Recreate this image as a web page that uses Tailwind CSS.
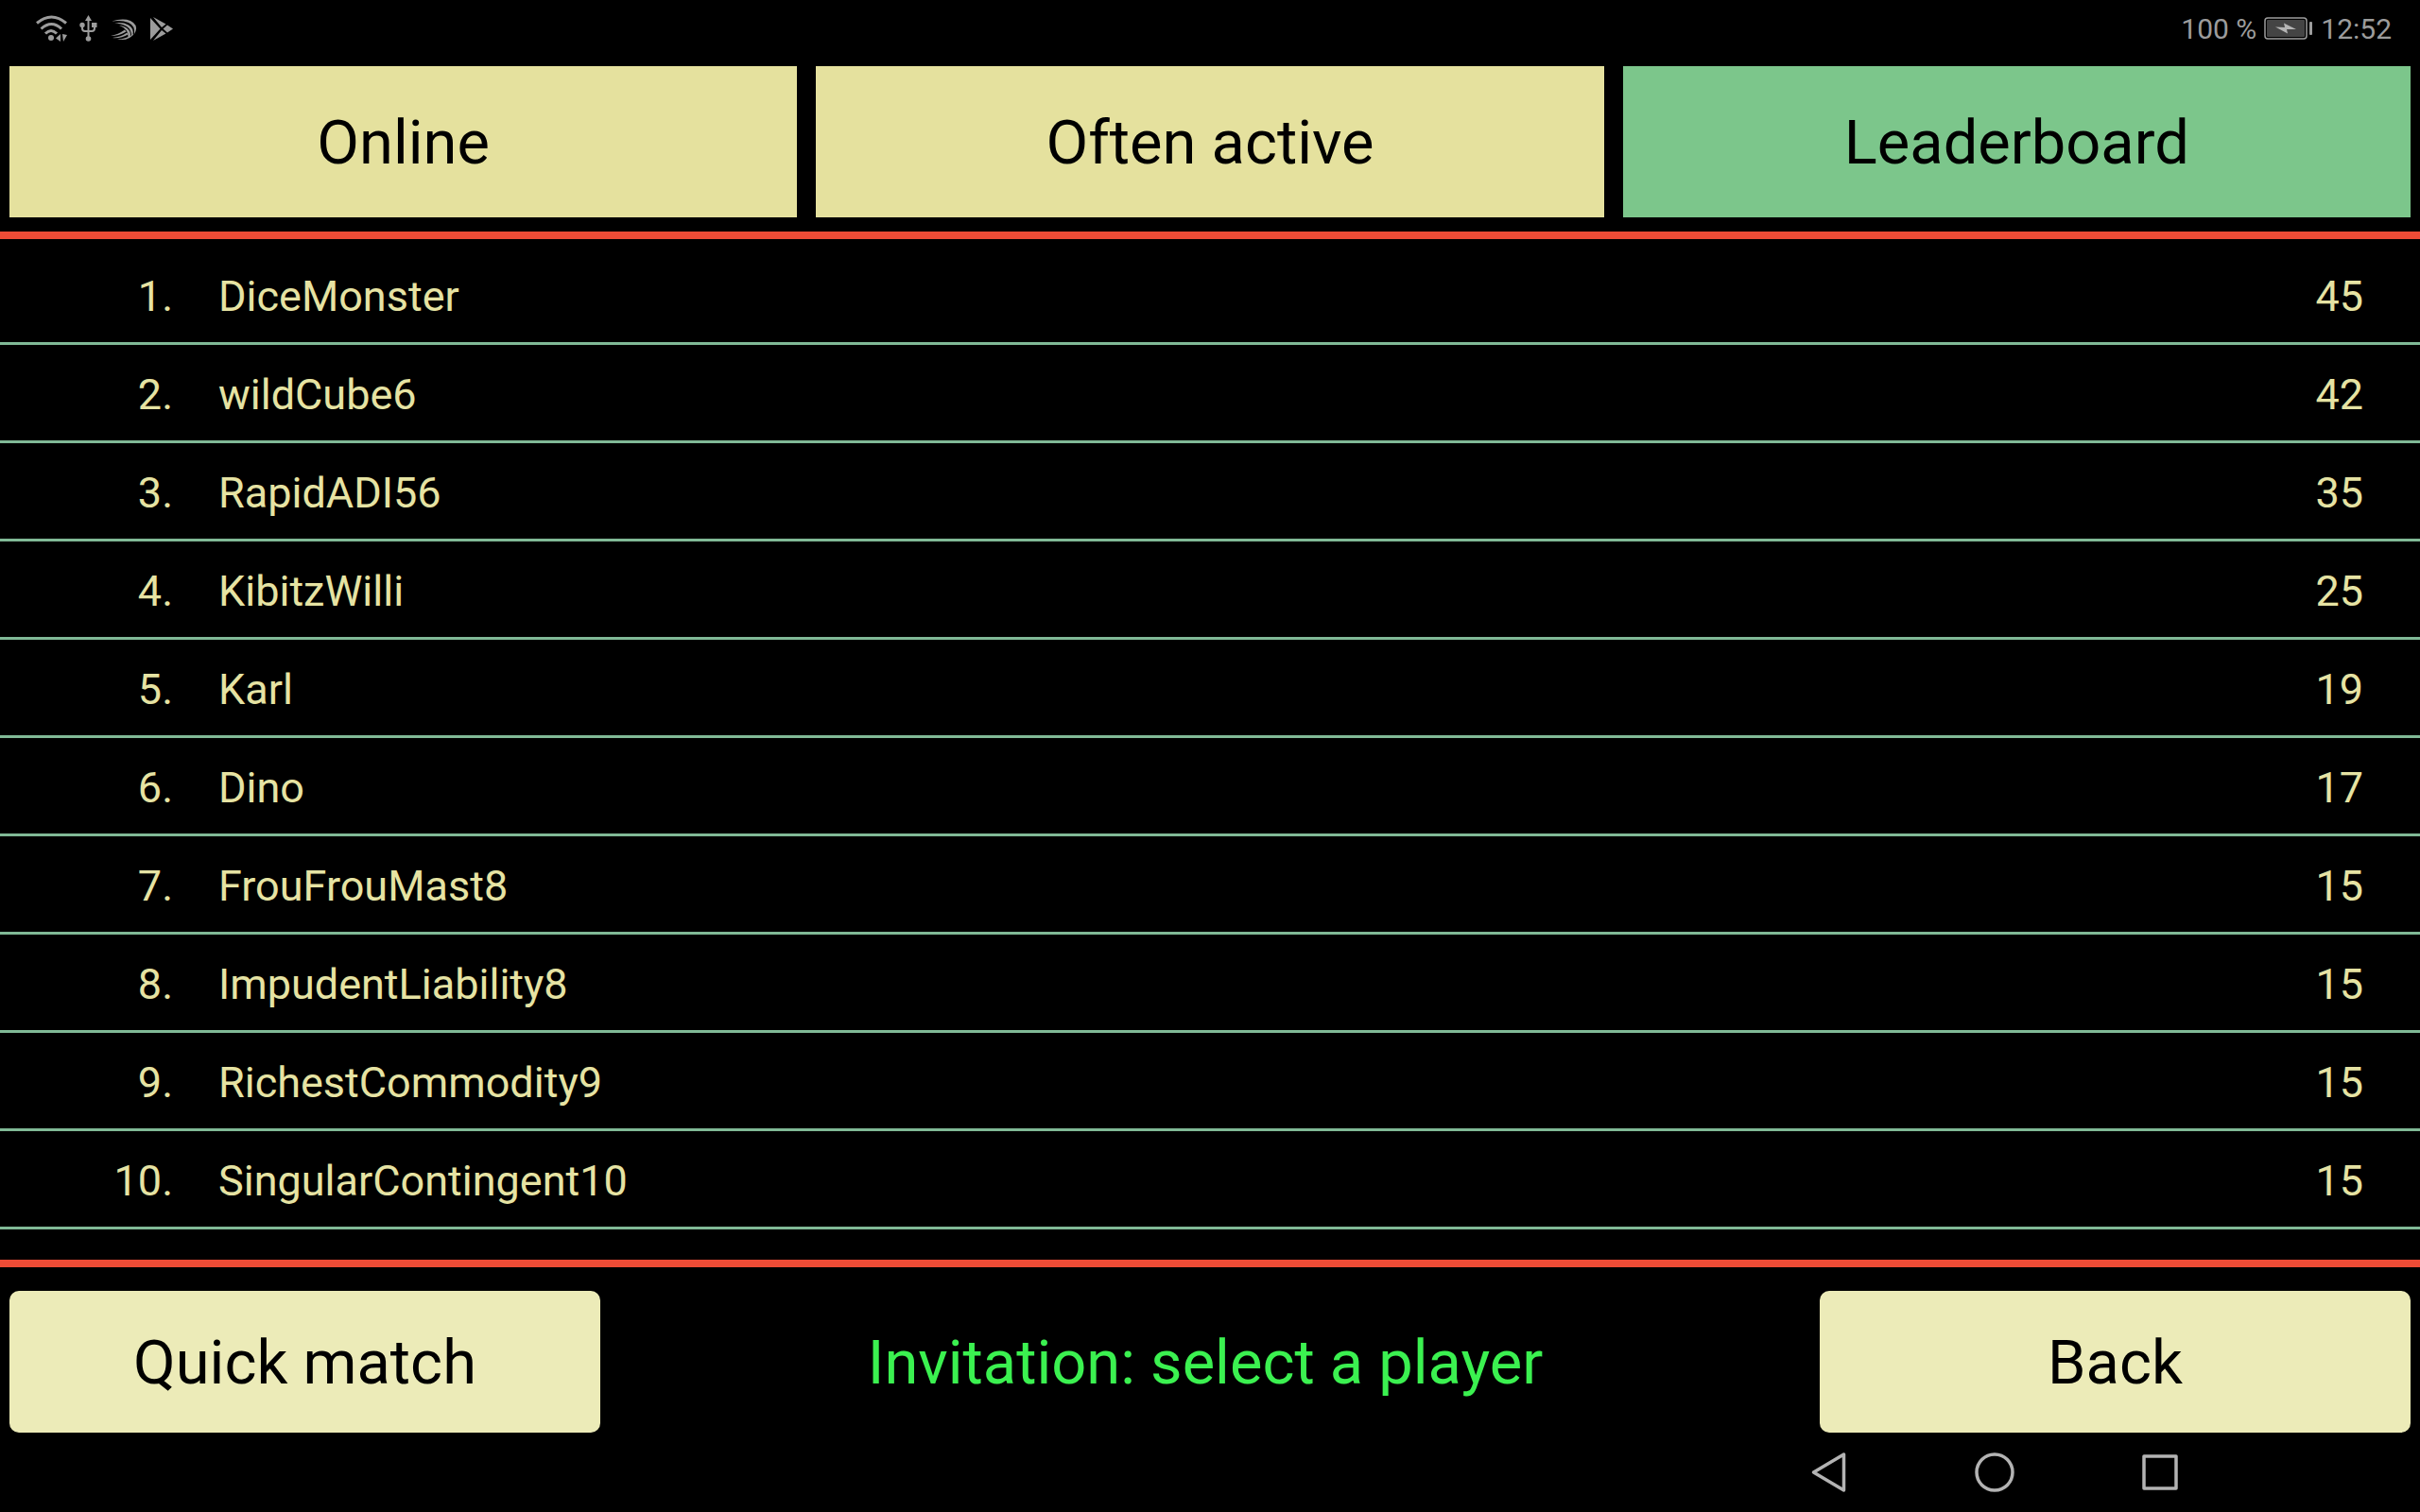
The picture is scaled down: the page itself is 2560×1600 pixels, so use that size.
<!DOCTYPE html>
<html lang="en">
<head>
    <meta charset="UTF-8">
    <meta name="viewport" content="width=device-width, initial-scale=1.0">
    <title>Leaderboard</title>
    <script src="https://cdn.jsdelivr.net/npm/@tailwindcss/browser@4"></script>
</head>
<body class="flex min-h-screen flex-col bg-black font-[Roboto,sans-serif]">
    <!-- Status bar -->
    <header class="flex h-[60px] items-center justify-between pr-[30px] pl-[38px] text-[30px] text-[#9c9c9c]">
        <div class="flex items-center gap-[13px]">
            <svg class="h-7 w-[33px]" viewBox="0 0 33 28" fill="none" stroke="currentColor" stroke-width="3">
                <path d="M1 8.5Q16.500 -4.500 32 8.500M5.500 14.500Q16.500 4.500 27 14.500M10 19.500Q16 13.500 22 19.500" />
                <circle cx="16" cy="24" r="3" fill="currentColor" stroke="none" />
                <path d="M26 20v8l-5 -3.500zM28 20l5 1l-4 7z" fill="currentColor" stroke="none" />
            </svg>
            <svg class="h-7 w-[19px]" viewBox="0 0 19 28" fill="none" stroke="currentColor" stroke-width="2">
                <path d="M9.500 4v19M3 10v4q0 3 3 3h7q3 0 3 -3v-4" />
                <path d="M9.500 0l3.500 6h-7z" fill="currentColor" stroke="none" />
                <circle cx="9.500" cy="25" r="2.800" fill="currentColor" stroke="none" />
                <circle cx="3" cy="10.500" r="2.700" fill="currentColor" stroke="none" />
                <path d="M13 8h5.500v5h-5.500z" fill="currentColor" stroke="none" />
            </svg>
            <svg class="h-7 w-[30px]" viewBox="0 0 30 28" fill="currentColor">
                <path d="M2 6.500Q14 3 22 6Q30 10 27.500 17L26 20Q27 11 20 8Q13 5 2 6.500z" />
                <path d="M5 8.500Q14 7 20 10.500Q26 14 24.500 21L23 22Q23 15 18 12Q12 8.500 5 8.500z" />
                <path d="M10 11Q17 11.500 20 15.500Q23 19 21.500 23L19.500 23Q20 19 17.500 16Q15 12.500 10 11z" />
                <path d="M1 22Q9 20.500 16 15.500L17.500 17.500Q10 22 1 22z" />
                <path d="M3 24Q12 23 18.500 18.500L19.500 20.500Q12 25 3 24z" />
                <path d="M8 25.500Q17 25.500 26 19.500Q20 28 8 25.500z" />
            </svg>
            <svg class="h-7 w-6" viewBox="0 0 24 28" fill="currentColor">
                <path d="M0 3L10.500 14.500L0 26z" />
                <path d="M3 2L16.500 9.500L12 13z" />
                <path d="M3 27L16.500 19.500L12 16z" />
                <path d="M18 10.500L24 14.500L18 18.500L13.500 14.500z" />
            </svg>
        </div>
        <div class="flex items-center gap-2">
            <span>100 %</span>
            <svg class="h-6 w-[52px]" viewBox="0 0 52 24">
                <rect x="1" y="1" width="44" height="22" rx="3" fill="none" stroke="#9c9c9c" stroke-width="1.500" />
                <rect x="3" y="3" width="40" height="18" rx="1" fill="#444444" />
                <path d="M12 10.500L22 11L21 6.500L34 13L24 13L25 17.500z" fill="#b4b4b4" />
                <rect x="48" y="5" width="3" height="14" rx="1" fill="#9c9c9c" />
            </svg>
            <span>12:52</span>
        </div>
    </header>

    <!-- Tabs -->
    <nav class="grid grid-cols-3 gap-5 border-b-8 border-[#ee4c36] px-[10px] pt-[10px] pb-[15px] text-[65px] text-black">
        <button type="button" class="h-[160px] bg-[#e5e19e] pt-1">Online</button>
        <button type="button" class="h-[160px] bg-[#e5e19e] pt-1">Often active</button>
        <button type="button" class="h-[160px] bg-[#7cc68b] pt-1">Leaderboard</button>
    </nav>

    <!-- Player list -->
    <main class="flex-1 pt-2">
        <table class="w-full border-separate border-spacing-0 text-[45px] leading-[52px] text-[#e6e3a3]">
            <tbody>
                <tr class="h-[104px]">
                    <td class="w-[183px] border-b-3 border-[#80b996] pt-1 text-right">1.</td>
                    <td class="border-b-3 border-[#80b996] pt-1 pl-12">DiceMonster</td>
                    <td class="border-b-3 border-[#80b996] pt-1 pr-[60px] text-right">45</td>
                </tr>
                <tr class="h-[104px]">
                    <td class="border-b-3 border-[#80b996] pt-1 text-right">2.</td>
                    <td class="border-b-3 border-[#80b996] pt-1 pl-12">wildCube6</td>
                    <td class="border-b-3 border-[#80b996] pt-1 pr-[60px] text-right">42</td>
                </tr>
                <tr class="h-[104px]">
                    <td class="border-b-3 border-[#80b996] pt-1 text-right">3.</td>
                    <td class="border-b-3 border-[#80b996] pt-1 pl-12">RapidADI56</td>
                    <td class="border-b-3 border-[#80b996] pt-1 pr-[60px] text-right">35</td>
                </tr>
                <tr class="h-[104px]">
                    <td class="border-b-3 border-[#80b996] pt-1 text-right">4.</td>
                    <td class="border-b-3 border-[#80b996] pt-1 pl-12">KibitzWilli</td>
                    <td class="border-b-3 border-[#80b996] pt-1 pr-[60px] text-right">25</td>
                </tr>
                <tr class="h-[104px]">
                    <td class="border-b-3 border-[#80b996] pt-1 text-right">5.</td>
                    <td class="border-b-3 border-[#80b996] pt-1 pl-12">Karl</td>
                    <td class="border-b-3 border-[#80b996] pt-1 pr-[60px] text-right">19</td>
                </tr>
                <tr class="h-[104px]">
                    <td class="border-b-3 border-[#80b996] pt-1 text-right">6.</td>
                    <td class="border-b-3 border-[#80b996] pt-1 pl-12">Dino</td>
                    <td class="border-b-3 border-[#80b996] pt-1 pr-[60px] text-right">17</td>
                </tr>
                <tr class="h-[104px]">
                    <td class="border-b-3 border-[#80b996] pt-1 text-right">7.</td>
                    <td class="border-b-3 border-[#80b996] pt-1 pl-12">FrouFrouMast8</td>
                    <td class="border-b-3 border-[#80b996] pt-1 pr-[60px] text-right">15</td>
                </tr>
                <tr class="h-[104px]">
                    <td class="border-b-3 border-[#80b996] pt-1 text-right">8.</td>
                    <td class="border-b-3 border-[#80b996] pt-1 pl-12">ImpudentLiability8</td>
                    <td class="border-b-3 border-[#80b996] pt-1 pr-[60px] text-right">15</td>
                </tr>
                <tr class="h-[104px]">
                    <td class="border-b-3 border-[#80b996] pt-1 text-right">9.</td>
                    <td class="border-b-3 border-[#80b996] pt-1 pl-12">RichestCommodity9</td>
                    <td class="border-b-3 border-[#80b996] pt-1 pr-[60px] text-right">15</td>
                </tr>
                <tr class="h-[104px]">
                    <td class="border-b-3 border-[#80b996] pt-1 text-right">10.</td>
                    <td class="border-b-3 border-[#80b996] pt-1 pl-12">SingularContingent10</td>
                    <td class="border-b-3 border-[#80b996] pt-1 pr-[60px] text-right">15</td>
                </tr>
            </tbody>
        </table>
    </main>

    <!-- Actions -->
    <footer class="flex items-center border-t-8 border-[#ee4c36] px-[10px] pt-[25px] text-[65px] text-black">
        <button type="button" class="h-[150px] w-[625px] rounded-[10px] bg-[#ecebb8] pt-1">Quick match</button>
        <p class="flex-1 pt-1 pr-[10px] text-center text-[#3bf150]">Invitation: select a player</p>
        <button type="button" class="h-[150px] w-[625px] rounded-[10px] bg-[#ecebb8] pt-1">Back</button>
    </footer>

    <!-- System navigation -->
    <nav class="flex h-[84px] items-center justify-end pr-[188px] text-[#b3b3b3]">
        <button type="button" aria-label="Back" class="flex w-[175px] justify-center">
            <svg class="size-11" viewBox="0 0 44 44" fill="none" stroke="currentColor" stroke-width="3.500" stroke-linejoin="round">
                <path d="M37.500 3v38L5.500 22z" />
            </svg>
        </button>
        <button type="button" aria-label="Home" class="flex w-[175px] justify-center">
            <svg class="size-11" viewBox="0 0 44 44" fill="none" stroke="currentColor" stroke-width="3.500">
                <circle cx="22" cy="22" r="19" />
            </svg>
        </button>
        <button type="button" aria-label="Recent apps" class="flex w-[175px] justify-center">
            <svg class="size-11" viewBox="0 0 44 44" fill="none" stroke="currentColor" stroke-width="3.500" stroke-linejoin="round">
                <rect x="5" y="5" width="34" height="34" />
            </svg>
        </button>
    </nav>
</body>
</html>
